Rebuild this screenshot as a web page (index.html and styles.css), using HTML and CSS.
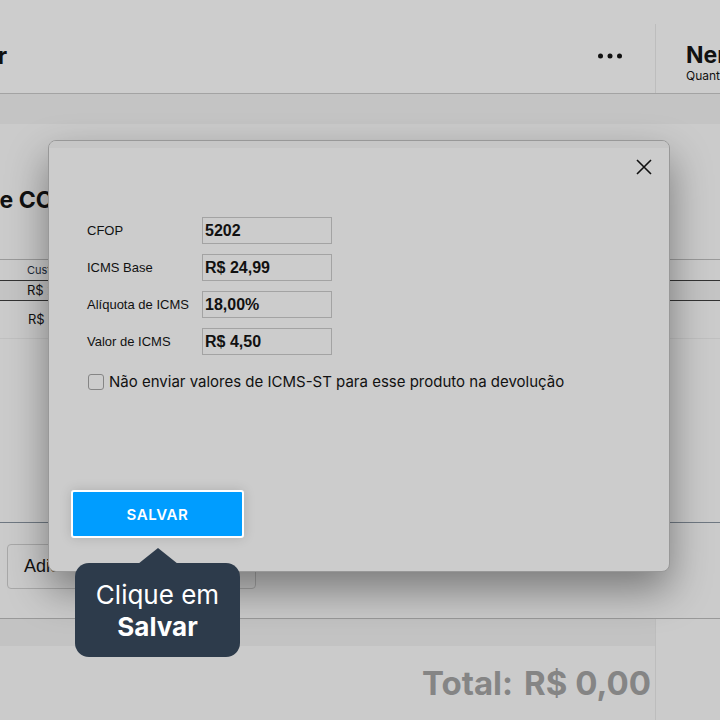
FILE: index.html
```html
<!DOCTYPE html>
<html>
<head>
    <meta charset="UTF-8">
    <meta name="viewport" content="width=device-width, initial-scale=1.0">
    <title>Devolução ao Fornecedor</title>
    <link rel="stylesheet" href="styles.css">
</head>
<body>
    <div class="page">
        <div class="topbar">
            <div class="clip-left title-box">
                <h1 class="page-title">Devolução ao Fornecedor</h1>
            </div>
            <div class="more">
                <svg width="24" height="6" viewBox="0 0 24 6"><circle cx="2.5" cy="3" r="2.5"/><circle cx="12" cy="3" r="2.5"/><circle cx="21.5" cy="3" r="2.5"/></svg>
            </div>
            <div class="summary">
                <div class="summary-name">Nenhum produto</div>
                <div class="summary-sub">Quantidade de itens: 0</div>
            </div>
        </div>
        <div class="strip"></div>
        <div class="content">
            <div class="clip-left section-box">
                <h2 class="section-title">Itens de COMPRA</h2>
            </div>
            <div class="table">
                <div class="thead">Custo</div>
                <div class="row row-sel">R$ 24,99</div>
                <div class="row">R$ 24,99</div>
            </div>
            <div class="actions">
                <button class="btn-outline">Adicionar produto</button>
            </div>
        </div>
        <div class="footer">
            <div class="footer-band"></div>
            <div class="footer-main">
                <div class="total"><span>Total:</span><span>R$ 0,00</span></div>
            </div>
        </div>

        <div class="modal">
            <div class="modal-top"></div>
            <div class="modal-head">
                <svg class="close" width="16" height="16" viewBox="0 0 16 16"><path d="M1 1L15 15M15 1L1 15"/></svg>
            </div>
            <div class="form">
                <div class="field"><label>CFOP</label><div class="input">5202</div></div>
                <div class="field"><label>ICMS Base</label><div class="input">R$ 24,99</div></div>
                <div class="field"><label>Alíquota de ICMS</label><div class="input">18,00%</div></div>
                <div class="field"><label>Valor de ICMS</label><div class="input">R$ 4,50</div></div>
                <div class="check"><span class="box"></span><span>Não enviar valores de ICMS-ST para esse produto na devolução</span></div>
            </div>
            <button class="btn-save">SALVAR</button>
        </div>

        <div class="tip">
            <div class="tip-arrow"></div>
            <div class="tip-body">Clique em<br><strong>Salvar</strong></div>
        </div>
    </div>
</body>
</html>
```

FILE: styles.css
```css
body {
    margin: 0;
    font-family: "Liberation Sans", Arial, sans-serif;
    color: #111;
    background: #cbcbcb;
}
.page {
    position: relative;
    width: 720px;
    height: 720px;
    overflow: hidden;
    background: #cbcbcb;
}
.clip-left {
    display: flex;
    justify-content: flex-end;
    white-space: nowrap;
}

/* top bar */
.topbar {
    height: 93px;
    border-bottom: 1px solid #a3a3a3;
    display: flex;
    align-items: flex-end;
    background: #cdcdcd;
}
.title-box {
    width: 7px;
    align-self: flex-start;
    margin-top: 42px;
}
.page-title {
    margin: 0;
    font-family: Inter, sans-serif;
    font-size: 23px;
    font-weight: 700;
    line-height: 28px;
}
.more {
    margin: 0 33px 34px auto;
    line-height: 0;
}
.more svg {
    fill: #111;
}
.summary {
    height: 69px;
    border-left: 1px solid #bdbdbd;
    width: 34px;
    padding-left: 30px;
    white-space: nowrap;
    overflow: hidden;
    font-family: Inter, sans-serif;
}
.summary-name {
    margin-top: 17px;
    font-size: 23px;
    font-weight: 700;
    line-height: 28px;
}
.summary-sub {
    font-size: 12px;
    line-height: 14px;
}
.strip {
    height: 30px;
    background: #c4c4c4;
}

/* main content */
.content {
    height: 494px;
    background: #cbcbcb;
    display: flex;
    flex-direction: column;
}
.section-box {
    width: 122px;
    margin-top: 61px;
}
.section-title {
    margin: 0;
    font-family: Inter, sans-serif;
    font-size: 23px;
    font-weight: 700;
    line-height: 30px;
}
.table {
    margin-top: 44px;
    border-top: 1px solid #9a9a9a;
    font-family: Inter, sans-serif;
}
.thead {
    height: 20px;
    line-height: 20px;
    font-size: 11px;
    padding-left: 27px;
    color: #1b2a3a;
}
.row {
    height: 37px;
    line-height: 37px;
    font-size: 13px;
    padding-left: 28px;
    border-bottom: 1px solid #c0c0c0;
}
.row-sel {
    height: 19px;
    line-height: 19px;
    padding-left: 27px;
    background: #c4c4c4;
    border-top: 1px solid #333;
    border-bottom: 1px solid #333;
}
.actions {
    margin-top: auto;
    border-top: 1px solid #6f7882;
    height: 96px;
    padding: 21px 0 0 7px;
    box-sizing: border-box;
}
.btn-outline {
    width: 249px;
    height: 45px;
    border: 1px solid #a8a8a8;
    border-radius: 4px;
    background: #cbcbcb;
    font-family: "Liberation Sans", Arial, sans-serif;
    font-size: 18px;
    text-align: left;
    padding-left: 16px;
    color: #111;
}

/* footer */
.footer {
    border-top: 1px solid #999;
    height: 101px;
}
.footer-band {
    height: 27px;
    background: #c3c3c3;
    margin-right: 64px;
    border-right: 1px solid #bdbdbd;
}
.footer-main {
    display: flex;
    height: 74px;
}
.total {
    width: 651px;
    border-right: 1px solid #bdbdbd;
    padding-right: 4px;
    display: flex;
    justify-content: flex-end;
    align-items: center;
    gap: 11px;
    font-family: Inter, sans-serif;
    font-size: 33px;
    font-weight: 700;
    color: #858585;
}

/* modal */
.modal {
    position: absolute;
    left: 48px;
    top: 140px;
    width: 620px;
    height: 430px;
    border: 1px solid #989898;
    border-radius: 8px;
    background: #cccccc;
    box-shadow: 0 18px 40px rgba(0, 0, 0, 0.4);
    display: flex;
    flex-direction: column;
    overflow: hidden;
}
.modal-top {
    height: 7px;
    background: #c6c6c6;
}
.modal-head {
    display: flex;
    justify-content: flex-end;
    padding: 11px 17px 0 0;
}
.close {
    stroke: #111;
    stroke-width: 1.6;
    fill: none;
}
.form {
    padding: 42px 0 0 38px;
    display: flex;
    flex-direction: column;
    gap: 10px;
}
.field {
    display: flex;
    align-items: center;
}
.field label {
    width: 115px;
    font-size: 13px;
}
.input {
    width: 126px;
    height: 25px;
    line-height: 25px;
    border: 1px solid #a3a3a3;
    padding-left: 2px;
    font-size: 16px;
    font-weight: 700;
}
.check {
    display: flex;
    align-items: center;
    gap: 5px;
    margin-top: 7px;
    margin-left: 1px;
    font-family: Inter, sans-serif;
    font-size: 15px;
}
.box {
    width: 14px;
    height: 14px;
    border: 1px solid #858585;
    border-radius: 3px;
}
.btn-save {
    margin: auto 0 33px 22px;
    width: 173px;
    height: 48px;
    border: 2px solid #fff;
    border-radius: 3px;
    background: #009dff;
    color: #fff;
    font-family: Inter, sans-serif;
    font-size: 15px;
    font-weight: 600;
    letter-spacing: 0.6px;
    box-shadow: 0 0 12px rgba(0, 0, 0, 0.15);
}

/* tooltip */
.tip {
    position: absolute;
    left: 75px;
    top: 548px;
    width: 165px;
    display: flex;
    flex-direction: column;
    align-items: center;
}
.tip-arrow {
    width: 0;
    height: 0;
    border-left: 20px solid transparent;
    border-right: 20px solid transparent;
    border-bottom: 16px solid #2d3b4b;
}
.tip-body {
    width: 165px;
    height: 94px;
    margin-top: -1px;
    box-sizing: border-box;
    padding-top: 16px;
    background: #2d3b4b;
    border-radius: 14px;
    color: #fff;
    font-family: Inter, sans-serif;
    font-size: 26px;
    line-height: 32px;
    text-align: center;
}
```
